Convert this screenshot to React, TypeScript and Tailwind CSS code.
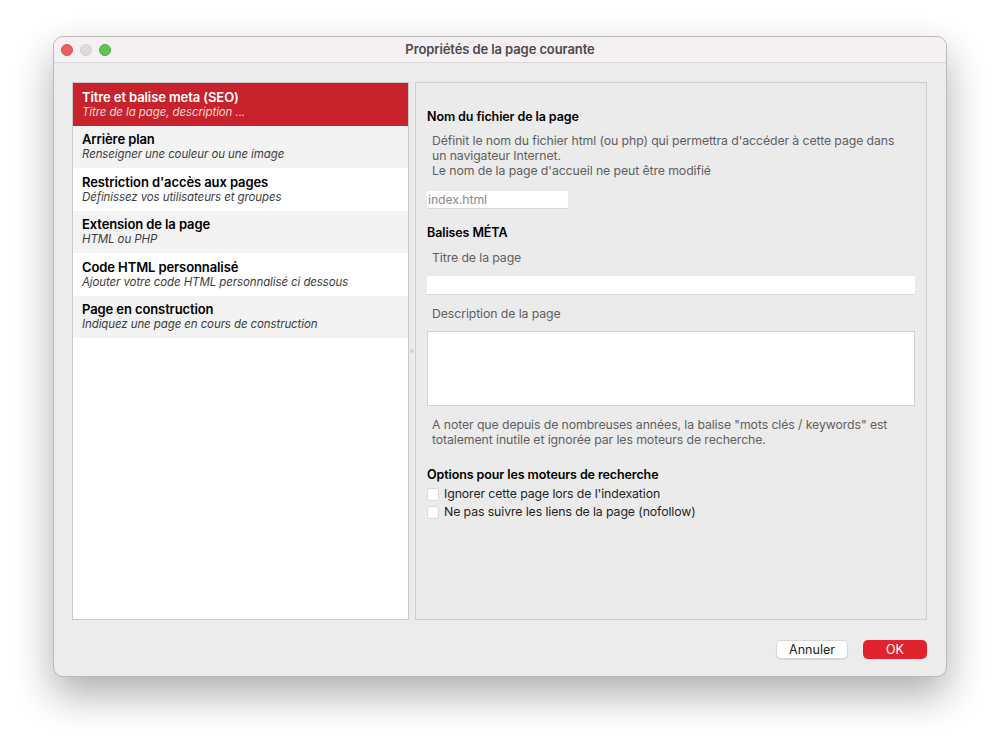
import React from "react";

const items = [
  { t: "Titre et balise meta (SEO)", s: "Titre de la page, description ...", sel: true },
  { t: "Arrière plan", s: "Renseigner une couleur ou une image" },
  { t: "Restriction d'accès aux pages", s: "Définissez vos utilisateurs et groupes" },
  { t: "Extension de la page", s: "HTML ou PHP" },
  { t: "Code HTML personnalisé", s: "Ajouter votre code HTML personnalisé ci dessous" },
  { t: "Page en construction", s: "Indiquez une page en cours de construction" },
];

export default function App() {
  return (
    <div
      className="w-[1000px] h-[747px] bg-white pl-[53px] pt-[36px]"
      style={{ fontFamily: "Inter, 'Liberation Sans', sans-serif" }}
    >
      <div className="w-[894px] h-[641px] rounded-[10px] bg-[#ececec] border border-[#b9b9b9] shadow-[0_18px_40px_rgba(0,0,0,0.32)] flex flex-col overflow-hidden">
        {/* Title bar */}
        <div className="h-[26px] bg-[#f5f0f3] border-b border-[#dcd8da] flex items-center relative shrink-0">
          <div className="flex gap-[7px] pl-[7px]">
            <div className="w-[12px] h-[12px] rounded-full bg-[#ec5f58] border border-[#d9504a]" />
            <div className="w-[12px] h-[12px] rounded-full bg-[#dcdcdc] border border-[#cfcfcf]" />
            <div className="w-[12px] h-[12px] rounded-full bg-[#61c454] border border-[#52ad45]" />
          </div>
          <div className="absolute inset-0 flex items-center justify-center text-[13px] font-semibold text-[#4b4b4b] tracking-[-0.1px]">
            Propriétés de la page courante
          </div>
        </div>
        {/* Body */}
        <div className="flex-1 flex flex-col pl-[18px] pr-[19px] pt-[19px]">
          <div className="flex h-[538px]">
            <div className="w-[337px] bg-white border border-[#c9c9c9] flex flex-col">
              {items.map((it, i) => (
                <div
                  key={i}
                  className={
                    "h-[42.5px] pl-[9px] flex flex-col justify-center " +
                    (it.sel ? "bg-[#c8232c] text-white" : i % 2 === 1 ? "bg-[#f3f3f3] text-black" : "bg-white text-black")
                  }
                >
                  <div className="text-[13px] font-semibold leading-[16px] tracking-[-0.1px]">{it.t}</div>
                  <div className={"text-[11.5px] italic leading-[15px] tracking-[-0.1px] " + (it.sel ? "text-[#f3d4d6]" : "text-[#3c3c3c]")}>
                    {it.s}
                  </div>
                </div>
              ))}
            </div>
            <div className="w-[6px] flex items-center justify-center">
              <div className="w-[4px] h-[4px] rounded-full bg-[#d4d4d4]" />
            </div>
            <div className="flex-1 bg-[#ebebeb] border border-[#cfcfcf] pl-[11px] pr-[11px] pt-[25px] text-[12.3px] tracking-[-0.1px]">
              <div className="font-semibold text-black leading-[18px] text-[12.5px]">Nom du fichier de la page</div>
              <div className="pl-[5px] mt-[7px] text-[#5f5f5f] leading-[15px]">
                Définit le nom du fichier html (ou php) qui permettra d'accéder à cette page dans
                <br />
                un navigateur Internet.
                <br />
                Le nom de la page d'accueil ne peut être modifié
              </div>
              <div className="mt-[13px] w-[141px] h-[18px] bg-white border-b border-[#d8d8d8] text-[#8a8a8a] leading-[18px] pl-[1px]">
                index.html
              </div>
              <div className="mt-[15px] font-semibold text-black leading-[18px] text-[12.5px]">Balises MÉTA</div>
              <div className="pl-[5px] mt-[8px] text-[#5f5f5f] leading-[15px]">Titre de la page</div>
              <div className="mt-[11px] h-[19px] bg-white border-b border-[#d8d8d8]" />
              <div className="pl-[5px] mt-[11px] text-[#5f5f5f] leading-[15px]">Description de la page</div>
              <div className="mt-[10px] h-[75px] bg-white border border-[#d2d2d2]" />
              <div className="pl-[5px] mt-[11px] text-[#5f5f5f] leading-[15px]">
                A noter que depuis de nombreuses années, la balise "mots clés / keywords" est
                <br />
                totalement inutile et ignorée par les moteurs de recherche.
              </div>
              <div className="mt-[19px] font-semibold text-black leading-[18px] text-[12.5px]">Options pour les moteurs de recherche</div>
              <div className="mt-[1px] flex items-center gap-[5px] leading-[18px] text-[#1f1f1f]">
                <div className="w-[12px] h-[13px] rounded-[3px] bg-white border border-[#dadada]" />
                Ignorer cette page lors de l'indexation
              </div>
              <div className="flex items-center gap-[5px] leading-[18px] text-[#1f1f1f]">
                <div className="w-[12px] h-[13px] rounded-[3px] bg-white border border-[#dadada]" />
                Ne pas suivre les liens de la page (nofollow)
              </div>
            </div>
          </div>
          <div className="flex justify-end gap-[15px] mt-[20px]">
            <button className="w-[72px] h-[19px] rounded-[5px] bg-white border border-[#d6d6d6] shadow-[0_1px_1px_rgba(0,0,0,0.08)] text-[12.5px] text-[#222] leading-[17px]">
              Annuler
            </button>
            <button className="w-[64px] h-[19px] rounded-[5px] bg-[#e0232d] text-[12.5px] text-white leading-[17px]">
              OK
            </button>
          </div>
        </div>
      </div>
    </div>
  );
}
